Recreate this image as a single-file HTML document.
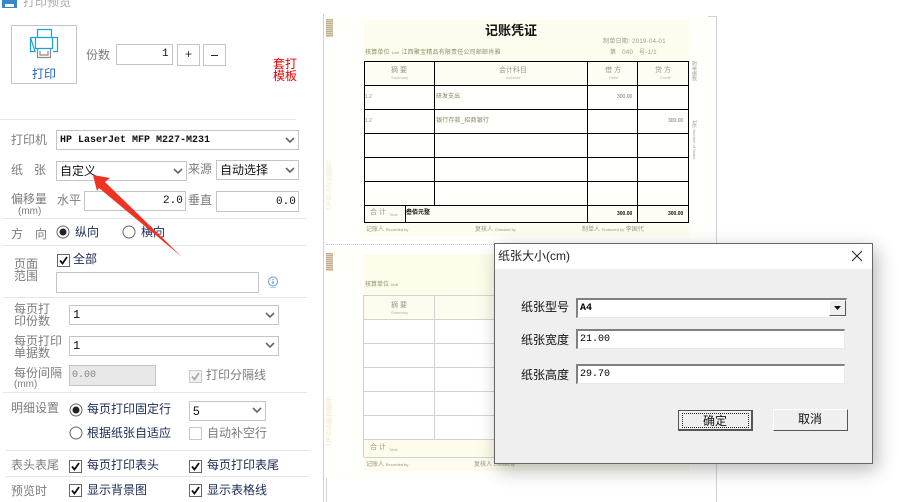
<!DOCTYPE html>
<html lang="zh"><head><meta charset="utf-8"><title>打印预览</title>
<style>
html,body{margin:0;padding:0;background:#fff}
#r{position:relative;width:899px;height:502px;overflow:hidden;background:#fff;font-family:"Liberation Sans","Noto Sans CJK SC",sans-serif;font-size:12px}
#r div,#r span,#r svg{position:absolute}
.l{color:#7c7c7c;line-height:12px;white-space:nowrap}
.n{color:#1b2a55;line-height:12px;white-space:nowrap}
.k{color:#111;white-space:nowrap}
.m{font-family:"Liberation Mono","Noto Sans CJK SC",monospace;font-size:11px;color:#111;white-space:nowrap}
.b{box-sizing:border-box;border:1px solid #c4c4c4;background:#fff}
.h{height:1px;background:#e6e6e6}
.c{box-sizing:border-box;width:13px;height:13px;border:1px solid #666;background:#fff}
.d{border-color:#c8c8c8}
.t{color:#9b9788;white-space:nowrap;font-size:7px;line-height:8px}
.x{color:#b5b1a2;white-space:nowrap;font-size:4px;line-height:5px}
.v{color:#a5a294;white-space:nowrap;font-size:5px;line-height:6px;writing-mode:vertical-rl}
.bk{background:#000}.gy{background:#d2d2d2}
.ti{box-sizing:border-box;background:#fff;border-top:2px solid #808080;border-left:2px solid #808080;border-right:1px solid #e8e8e8;border-bottom:1px solid #e8e8e8;font-size:10px;padding-left:2px;line-height:17px}
</style></head><body><div id="r">

<!-- title -->
<svg style="left:2px;top:0" width="17" height="9" viewBox="0 0 17 9"><rect x="0" y="0" width="15" height="8" fill="#3a85c8"/><rect x="3" y="4" width="9" height="3" fill="#fff"/></svg>
<span style="left:23px;top:-5px;font-size:12px;line-height:14px;color:#aaa">打印预览</span>

<!-- print button -->
<div class="b" style="left:11px;top:25px;width:66px;height:59px"></div>
<svg style="left:29px;top:28px" width="30" height="32" viewBox="0 0 30 32" fill="none">
<path d="M8.500 20V29.500H21.500V20M11 23V27H19V23" stroke="#8a8a8a" stroke-width="1.200"/>
<path d="M8.500 9.500V1.500H22.500V9.500" stroke="#12a5e0" stroke-width="1.200"/>
<path d="M1.500 9.500H28.500V23.500H24M6 23.500H1.500V9.500ZM6.500 9.500V20.500H23.500V9.500" stroke="#12a5e0" stroke-width="1.200"/>
</svg>
<span style="left:32px;top:68px;color:#2060c0;line-height:13px">打印</span>

<span class="l" style="left:86px;top:49px">份数</span>
<div class="b" style="left:116px;top:44px;width:57px;height:21px"></div>
<span class="m" style="left:162px;top:47px;line-height:14px">1</span>
<div class="b" style="left:177px;top:44px;width:23px;height:22px"></div>
<span style="left:185px;top:47px;color:#1b2a55;line-height:15px;font-size:12px">+</span>
<div class="b" style="left:203px;top:44px;width:23px;height:22px"></div>
<div style="left:211px;top:55px;width:7px;height:1px;background:#1b2a55"></div>
<span style="left:273px;top:58px;width:24px;color:#e60000;line-height:12px">套打<br>模板</span>

<div class="h" style="left:0;top:119px;width:296px"></div>

<!-- printer -->
<span class="l" style="left:11px;top:134px">打印机</span>
<div class="b" style="left:56px;top:130px;width:243px;height:20px"></div>
<span class="m" style="left:60px;top:134px;font-size:10px;line-height:14px;font-weight:bold">HP LaserJet MFP M227-M231</span>
<svg style="left:285px;top:136px" width="10" height="8"><path d="M1 2L5 6L9 2" fill="none" stroke="#666" stroke-width="1.600"/></svg>

<span class="l" style="left:11px;top:164px">纸</span><span class="l" style="left:34px;top:164px">张</span>
<div class="b" style="left:56px;top:161px;width:131px;height:20px"></div>
<span class="k" style="left:60px;top:164px;line-height:14px">自定义</span>
<svg style="left:173px;top:167px" width="10" height="8"><path d="M1 2L5 6L9 2" fill="none" stroke="#666" stroke-width="1.600"/></svg>
<span class="l" style="left:188px;top:163px">来源</span>
<div class="b" style="left:216px;top:160px;width:83px;height:20px"></div>
<span class="k" style="left:220px;top:163px;line-height:14px">自动选择</span>
<svg style="left:285px;top:166px" width="10" height="8"><path d="M1 2L5 6L9 2" fill="none" stroke="#666" stroke-width="1.600"/></svg>

<span class="l" style="left:11px;top:193px">偏移量</span>
<span class="l" style="left:18px;top:206px;font-size:10px">(mm)</span>
<span class="l" style="left:57px;top:194px">水平</span>
<div class="b" style="left:84px;top:191px;width:102px;height:20px"></div>
<span class="m" style="left:163px;top:194px;line-height:14px">2.0</span>
<span class="l" style="left:188px;top:194px">垂直</span>
<div class="b" style="left:216px;top:191px;width:83px;height:21px"></div>
<span class="m" style="left:276px;top:195px;line-height:14px">0.0</span>
<div class="h" style="left:3px;top:218px;width:304px"></div>

<!-- orientation -->
<span class="l" style="left:11px;top:228px">方</span><span class="l" style="left:35px;top:228px">向</span>
<svg style="left:56px;top:225px" width="15" height="15"><circle cx="7" cy="7" r="6" fill="#fff" stroke="#666"/><circle cx="7" cy="7" r="3.500" fill="#222"/></svg>
<span class="n" style="left:75px;top:226px">纵向</span>
<svg style="left:122px;top:225px" width="15" height="15"><circle cx="7" cy="7" r="6" fill="#fff" stroke="#666"/></svg>
<span class="n" style="left:141px;top:226px">横向</span>
<div class="h" style="left:3px;top:245px;width:304px"></div>

<!-- page range -->
<span class="l" style="left:14px;top:258px;width:26px">页面<br>范围</span>
<div class="c" style="left:57px;top:254px"></div>
<svg style="left:57px;top:254px" width="13" height="13"><path d="M3 6.500L5.500 9.500L10 3" fill="none" stroke="#111" stroke-width="1.800"/></svg>
<span class="n" style="left:73px;top:253px">全部</span>
<div class="b" style="left:56px;top:272px;width:203px;height:21px"></div>
<svg style="left:267px;top:276px" width="12" height="13"><circle cx="6" cy="5.500" r="4.500" fill="#fff" stroke="#5b9bd5"/><path d="M6 3V4M6 5V8" stroke="#3a7fc0"/><path d="M3 11.500H9" stroke="#bcd" /></svg>
<div class="h" style="left:3px;top:297px;width:304px"></div>

<span class="l" style="left:14px;top:303px;width:50px">每页打<br>印份数</span>
<div class="b" style="left:69px;top:305px;width:210px;height:20px"></div>
<span class="k" style="left:73px;top:308px;line-height:14px;font-family:'Liberation Mono',monospace">1</span>
<svg style="left:265px;top:311px" width="10" height="8"><path d="M1 2L5 6L9 2" fill="none" stroke="#666" stroke-width="1.600"/></svg>

<span class="l" style="left:14px;top:335px;width:50px">每页打印<br>单据数</span>
<div class="b" style="left:69px;top:336px;width:210px;height:20px"></div>
<span class="k" style="left:73px;top:339px;line-height:14px;font-family:'Liberation Mono',monospace">1</span>
<svg style="left:265px;top:341px" width="10" height="8"><path d="M1 2L5 6L9 2" fill="none" stroke="#666" stroke-width="1.600"/></svg>

<span class="l" style="left:14px;top:367px">每份间隔</span>
<span class="l" style="left:14px;top:379px;font-size:10px">(mm)</span>
<div class="b" style="left:69px;top:365px;width:87px;height:21px;background:#e8e8e8"></div>
<span style="left:72px;top:369px;color:#888;line-height:14px;font-size:10px;font-family:'Liberation Mono',monospace">0.00</span>
<div class="c d" style="left:189px;top:370px;background:#f2f2f2"></div>
<svg style="left:189px;top:370px" width="13" height="13"><path d="M3 6.500L5.500 9.500L10 3" fill="none" stroke="#aaa" stroke-width="1.800"/></svg>
<span class="l" style="left:206px;top:369px">打印分隔线</span>
<div class="h" style="left:3px;top:392px;width:304px"></div>

<!-- details -->
<span class="l" style="left:11px;top:402px">明细设置</span>
<svg style="left:69px;top:403px" width="15" height="15"><circle cx="7" cy="7" r="6" fill="#fff" stroke="#666"/><circle cx="7" cy="7" r="3.500" fill="#222"/></svg>
<span class="n" style="left:87px;top:403px">每页打印固定行</span>
<div class="b" style="left:189px;top:401px;width:77px;height:20px"></div>
<span class="k" style="left:193px;top:404px;line-height:14px">5</span>
<svg style="left:252px;top:406px" width="10" height="8"><path d="M1 2L5 6L9 2" fill="none" stroke="#666" stroke-width="1.600"/></svg>
<svg style="left:69px;top:426px" width="15" height="15"><circle cx="7" cy="7" r="6" fill="#fff" stroke="#666"/></svg>
<span class="n" style="left:87px;top:427px">根据纸张自适应</span>
<div class="c d" style="left:189px;top:427px"></div>
<span class="l" style="left:207px;top:427px">自动补空行</span>
<div class="h" style="left:6px;top:450px;width:304px"></div>

<span class="l" style="left:11px;top:459px">表头表尾</span>
<div class="c" style="left:69px;top:460px"></div>
<svg style="left:69px;top:460px" width="13" height="13"><path d="M3 6.500L5.500 9.500L10 3" fill="none" stroke="#111" stroke-width="1.800"/></svg>
<span class="n" style="left:87px;top:459px">每页打印表头</span>
<div class="c" style="left:189px;top:460px"></div>
<svg style="left:189px;top:460px" width="13" height="13"><path d="M3 6.500L5.500 9.500L10 3" fill="none" stroke="#111" stroke-width="1.800"/></svg>
<span class="n" style="left:207px;top:459px">每页打印表尾</span>
<div class="h" style="left:6px;top:476px;width:304px"></div>

<span class="l" style="left:11px;top:485px">预览时</span>
<div class="c" style="left:69px;top:484px"></div>
<svg style="left:69px;top:484px" width="13" height="13"><path d="M3 6.500L5.500 9.500L10 3" fill="none" stroke="#111" stroke-width="1.800"/></svg>
<span class="n" style="left:87px;top:484px">显示背景图</span>
<div class="c" style="left:189px;top:484px"></div>
<svg style="left:189px;top:484px" width="13" height="13"><path d="M3 6.500L5.500 9.500L10 3" fill="none" stroke="#111" stroke-width="1.800"/></svg>
<span class="n" style="left:207px;top:484px">显示表格线</span>

<!-- preview frame -->
<div class="gy" style="left:323px;top:14px;width:1px;height:488px"></div>
<div class="gy" style="left:326px;top:478px;width:1px;height:24px"></div>
<div class="gy" style="left:708px;top:16px;width:9px;height:1px"></div>
<div class="gy" style="left:716px;top:16px;width:1px;height:486px"></div>

<!-- page 1 -->
<div style="left:327px;top:16px;width:380px;height:224px;background:#fffffc"></div>
<div style="left:364px;top:20px;width:325px;height:41px;background:#fdfcee"></div>
<div style="left:364px;top:62px;width:324px;height:23px;background:#fefdf3"></div>
<div style="left:364px;top:206px;width:324px;height:16px;background:#fefdf3"></div>
<div style="left:364px;top:223px;width:325px;height:13px;background:#fdfcee"></div>
<div style="left:326px;top:19px;width:7px;height:18px;background:repeating-linear-gradient(#bfb090 0 1px,#ddd2bb 1px 2px)"></div>
<span style="left:327px;top:160px;font-size:7px;font-weight:bold;color:#f6f2df;writing-mode:vertical-rl;transform:rotate(180deg);white-space:nowrap;line-height:6px">UFIDA用友图书</span>

<span style="left:485px;top:23px;font-size:13px;line-height:16px;font-weight:bold;color:#111">记账凭证</span>
<span class="t" style="left:603px;top:38px;font-size:6px;letter-spacing:.3px">制单日期: 2019-04-01</span>
<span class="t" style="left:365px;top:49px;font-size:6px;color:#8f8f70;letter-spacing:.2px">核算单位 <span style="position:static;font-size:4px">Unit</span> 江西聚宝精品有限责任公司邮邮肖雅</span>
<span class="t" style="left:610px;top:49px;font-size:6px;letter-spacing:.3px">第 &nbsp; 040 &nbsp; 号-1/1</span>

<div class="bk" style="left:364px;top:61px;width:325px;height:1px"></div>
<div class="bk" style="left:364px;top:85px;width:325px;height:1px"></div>
<div class="bk" style="left:364px;top:109px;width:325px;height:1px"></div>
<div class="bk" style="left:364px;top:133px;width:325px;height:1px"></div>
<div class="bk" style="left:364px;top:157px;width:325px;height:1px"></div>
<div class="bk" style="left:364px;top:181px;width:325px;height:1px"></div>
<div class="bk" style="left:364px;top:205px;width:325px;height:1px"></div>
<div class="bk" style="left:364px;top:222px;width:325px;height:1px"></div>
<div class="bk" style="left:364px;top:61px;width:1px;height:162px"></div>
<div class="bk" style="left:434px;top:61px;width:1px;height:145px"></div>
<div class="bk" style="left:405px;top:205px;width:1px;height:18px"></div>
<div class="bk" style="left:587px;top:61px;width:1px;height:162px"></div>
<div class="bk" style="left:637px;top:61px;width:1px;height:162px"></div>
<div class="bk" style="left:688px;top:61px;width:1px;height:162px"></div>

<span class="t" style="left:391px;top:67px">摘 要</span><span class="x" style="left:391px;top:75px">Summary</span>
<span class="t" style="left:499px;top:67px">会计科目</span><span class="x" style="left:506px;top:75px">Account</span>
<span class="t" style="left:605px;top:67px">借 方</span><span class="x" style="left:609px;top:75px">Debit</span>
<span class="t" style="left:655px;top:67px">贷 方</span><span class="x" style="left:660px;top:75px">Credit</span>
<span class="t" style="left:365px;top:93px;font-size:5px">1.2</span>
<span class="t" style="left:436px;top:93px;font-size:6px;color:#888066">研发支出</span>
<span class="t" style="left:617px;top:93px;font-size:5px;color:#777">300.00</span>
<span class="t" style="left:365px;top:117px;font-size:5px">1.2</span>
<span class="t" style="left:436px;top:117px;font-size:6px;color:#888066;letter-spacing:.2px">银行存款_招商银行</span>
<span class="t" style="left:668px;top:117px;font-size:5px;color:#777">300.00</span>
<span class="t" style="left:370px;top:209px">合 计</span><span class="x" style="left:389px;top:212px">Total</span>
<span class="t" style="left:406px;top:209px;font-size:6px;color:#111;font-weight:bold">叁佰元整</span>
<span class="t" style="left:617px;top:210px;font-size:5px;color:#111;font-weight:bold">300.00</span>
<span class="t" style="left:668px;top:210px;font-size:5px;color:#111;font-weight:bold">300.00</span>
<span class="t" style="left:366px;top:226px;font-size:6px">记账人 <span style="position:static;font-size:4px">Recorded by</span></span>
<span class="t" style="left:475px;top:226px;font-size:6px">复核人 <span style="position:static;font-size:4px">Checked by</span></span>
<span class="t" style="left:582px;top:226px;font-size:6px">制单人 <span style="position:static;font-size:4px">Produced by</span> 李国代</span>
<span class="v" style="left:691px;top:61px">附单据数</span>
<span class="v" style="left:691px;top:120px">1张 <span style="position:static;font-size:4px">Number of Notes</span></span>

<div style="left:326px;top:244px;width:170px;height:0;border-top:1px dotted #ccc"></div>

<!-- page 2 -->
<div style="left:327px;top:250px;width:380px;height:228px;background:#fffffc"></div>
<div style="left:364px;top:254px;width:325px;height:41px;background:#fdfcea"></div>
<div style="left:364px;top:296px;width:325px;height:23px;background:#fdfcee"></div>
<div style="left:364px;top:440px;width:325px;height:17px;background:#fdfcea"></div>
<div style="left:364px;top:458px;width:325px;height:13px;background:#fdfcee"></div>
<div style="left:364px;top:320px;width:325px;height:119px;background:#fff"></div>
<div style="left:326px;top:253px;width:7px;height:18px;background:repeating-linear-gradient(#bfb090 0 1px,#ddd2bb 1px 2px)"></div>
<span style="left:327px;top:396px;font-size:7px;font-weight:bold;color:#f4efd2;writing-mode:vertical-rl;transform:rotate(180deg);white-space:nowrap;line-height:6px">UFIDA用友图书</span>
<span class="t" style="left:365px;top:281px;font-size:6px;color:#8f8f70">核算单位 <span style="position:static;font-size:4px">Unit</span></span>
<div class="gy" style="left:364px;top:295px;width:325px;height:1px"></div>
<div class="gy" style="left:364px;top:319px;width:325px;height:1px"></div>
<div class="gy" style="left:364px;top:343px;width:325px;height:1px"></div>
<div class="gy" style="left:364px;top:367px;width:325px;height:1px"></div>
<div class="gy" style="left:364px;top:391px;width:325px;height:1px"></div>
<div class="gy" style="left:364px;top:415px;width:325px;height:1px"></div>
<div class="gy" style="left:364px;top:439px;width:325px;height:1px"></div>
<div class="gy" style="left:364px;top:457px;width:325px;height:1px"></div>
<div class="gy" style="left:363px;top:295px;width:1px;height:162px"></div>
<div class="gy" style="left:434px;top:295px;width:1px;height:145px"></div>
<span class="t" style="left:391px;top:302px">摘 要</span><span class="x" style="left:391px;top:310px">Summary</span>
<span class="t" style="left:370px;top:444px">合 计</span><span class="x" style="left:389px;top:447px">Total</span>
<span class="t" style="left:366px;top:461px;font-size:6px">记账人 <span style="position:static;font-size:4px">Recorded by</span></span>
<span class="t" style="left:474px;top:461px;font-size:6px">复核人 <span style="position:static;font-size:4px">Checked by</span></span>

<!-- arrow -->
<svg style="left:80px;top:165px" width="110" height="100" viewBox="0 0 110 100"><path d="M13 10L30 13L25 17L102 92L19 23L17 26Z" fill="#ee3322"/></svg>

<!-- dialog -->
<div style="left:494px;top:243px;width:379px;height:221px;box-sizing:border-box;border:1px solid #666;background:#efefef;box-shadow:4px 6px 18px rgba(0,0,0,.28)"></div>
<div style="left:495px;top:244px;width:377px;height:25px;background:#fff"></div>
<span style="left:498px;top:249px;line-height:14px;font-size:12px;color:#222">纸张大小(cm)</span>
<svg style="left:851px;top:250px" width="12" height="12"><path d="M1 1L11 11M11 1L1 11" stroke="#222" stroke-width="1"/></svg>

<span class="k" style="left:521px;top:300px;line-height:14px">纸张型号</span>
<div class="ti" style="left:576px;top:298px;width:271px;height:20px;font-family:'Liberation Mono',monospace;font-weight:bold">A4</div>
<div style="left:829px;top:300px;width:17px;height:16px;box-sizing:border-box;background:#efefef;border:1px solid;border-color:#fff #555 #555 #fff"></div>
<svg style="left:833px;top:305px" width="9" height="6"><path d="M1 1H8L4.500 5Z" fill="#111"/></svg>

<span class="k" style="left:521px;top:333px;line-height:14px">纸张宽度</span>
<div class="ti" style="left:576px;top:329px;width:269px;height:20px;font-family:'Liberation Mono',monospace">21.00</div>
<span class="k" style="left:521px;top:368px;line-height:14px">纸张高度</span>
<div class="ti" style="left:576px;top:364px;width:269px;height:20px;font-family:'Liberation Mono',monospace">29.70</div>

<div style="left:678px;top:410px;width:75px;height:21px;box-sizing:border-box;background:#efefef;border:1px solid #555;border-right:2px solid #555;border-bottom:2px solid #555"></div>
<div style="left:682px;top:413px;width:67px;height:15px;box-sizing:border-box;border:1px dotted #222"></div>
<span class="k" style="left:703px;top:414px;line-height:14px">确定</span>
<div style="left:773px;top:409px;width:75px;height:22px;box-sizing:border-box;background:#efefef;border:1px solid;border-color:#fff #555 #555 #fff"></div>
<span class="k" style="left:798px;top:412px;line-height:14px">取消</span>
</div></body></html>
